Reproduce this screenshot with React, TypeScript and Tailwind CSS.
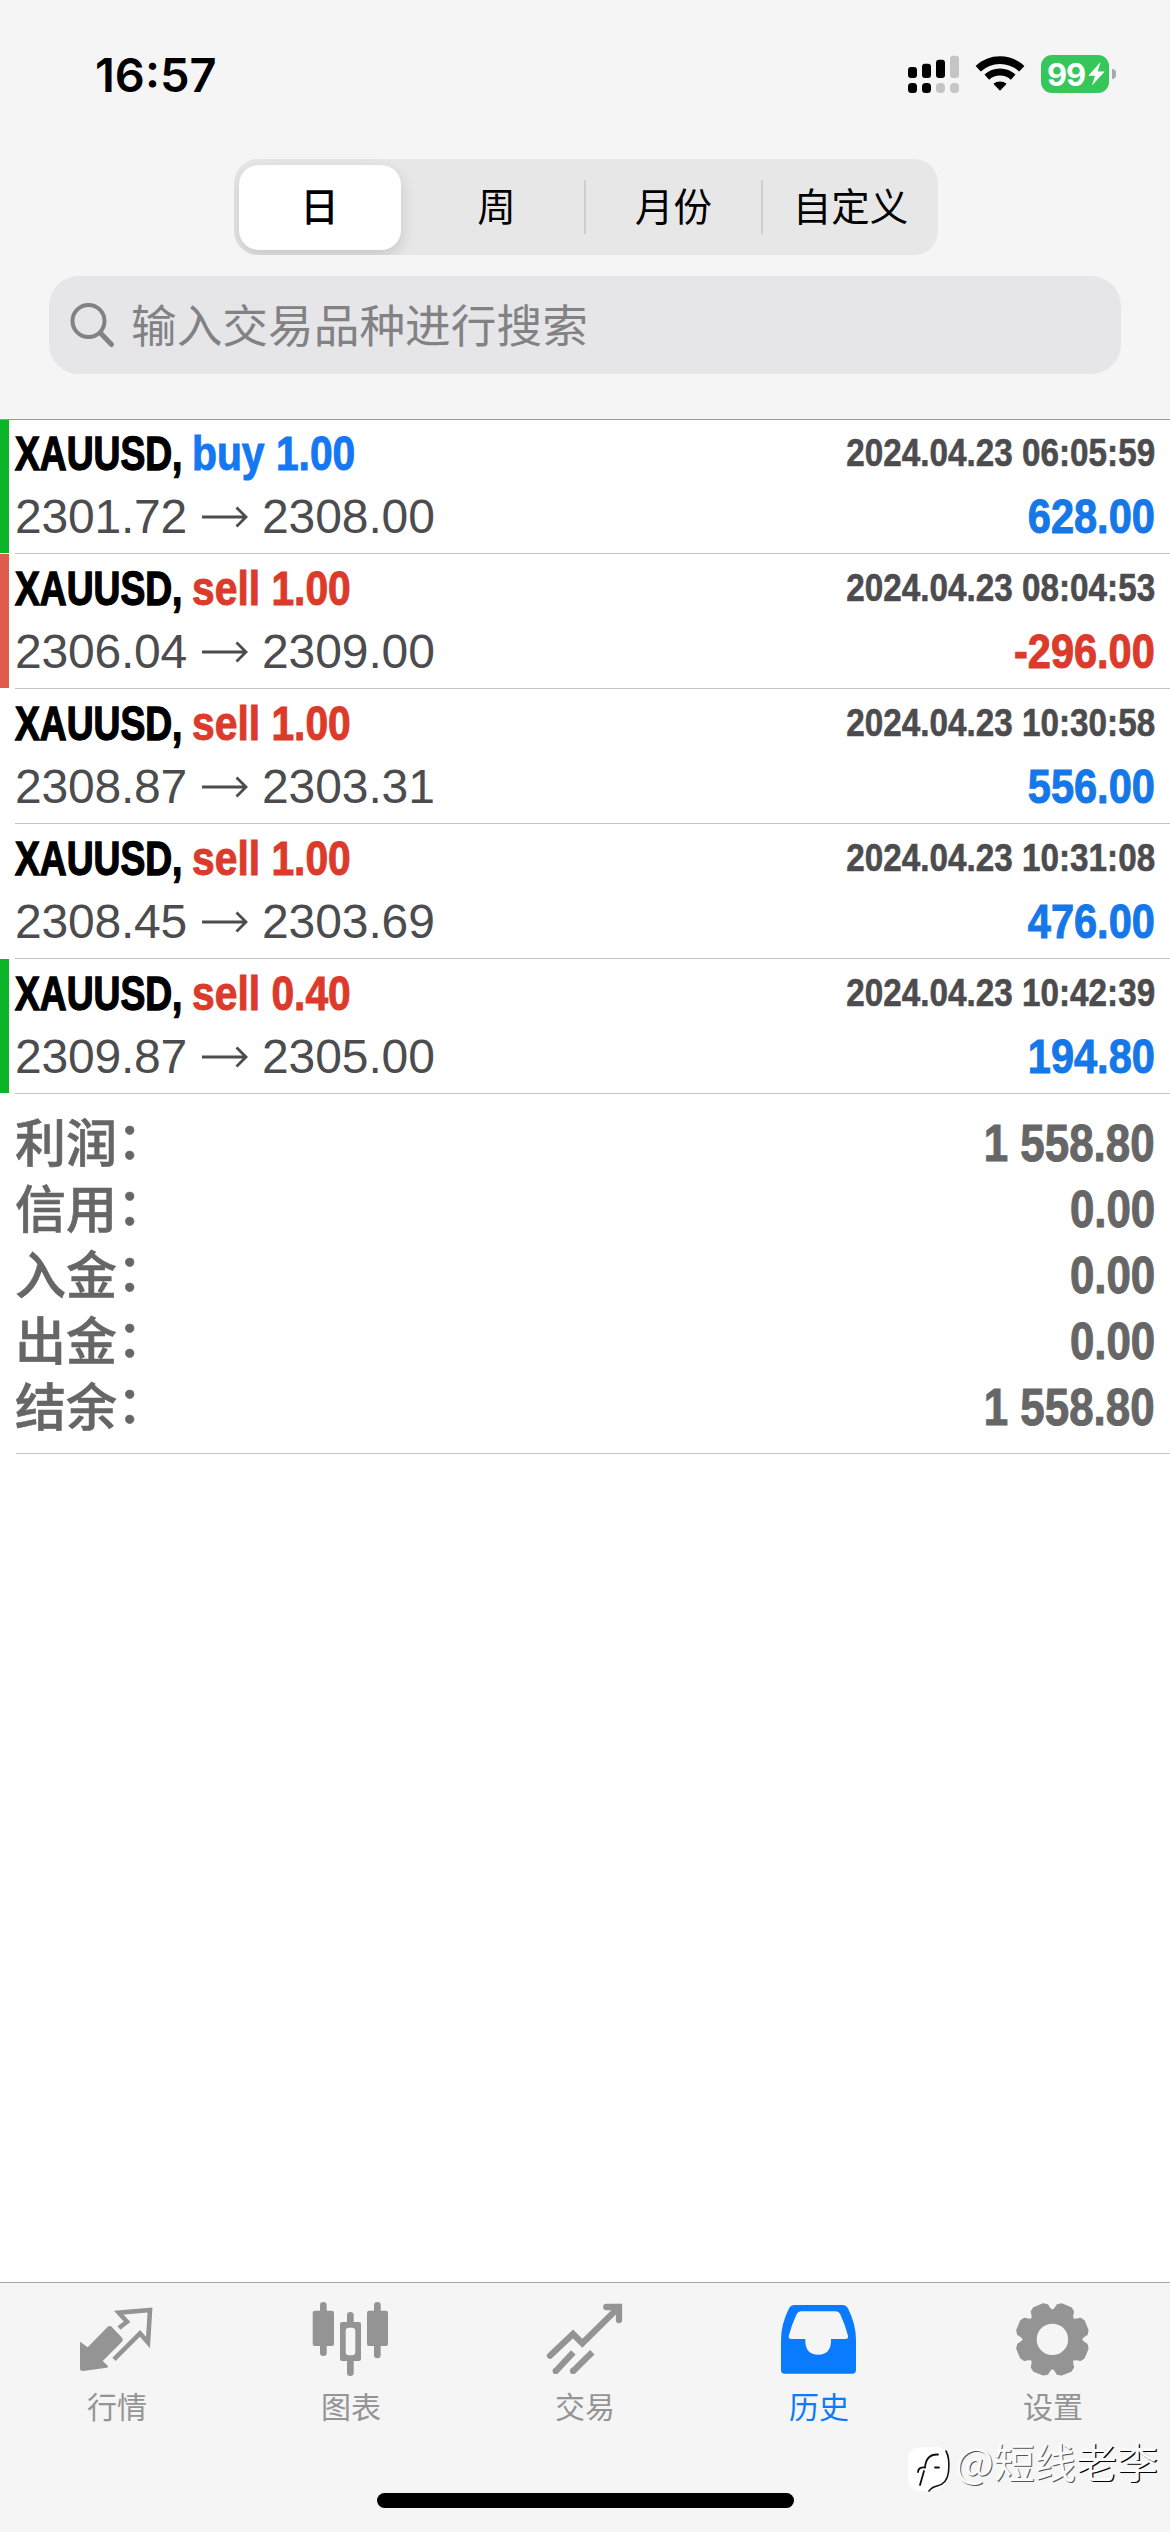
import type { ReactNode } from 'react';
import clsx from 'clsx';

interface Deal {
  symbol: string;
  side: 'buy' | 'sell';
  volume: string;
  open: string;
  close: string;
  time: string;
  profit: string;
  mark?: 'tp' | 'sl';
}

const deals: Deal[] = [
  { symbol: 'XAUUSD', side: 'buy', volume: '1.00', open: '2301.72', close: '2308.00', time: '2024.04.23 06:05:59', profit: '628.00', mark: 'tp' },
  { symbol: 'XAUUSD', side: 'sell', volume: '1.00', open: '2306.04', close: '2309.00', time: '2024.04.23 08:04:53', profit: '-296.00', mark: 'sl' },
  { symbol: 'XAUUSD', side: 'sell', volume: '1.00', open: '2308.87', close: '2303.31', time: '2024.04.23 10:30:58', profit: '556.00' },
  { symbol: 'XAUUSD', side: 'sell', volume: '1.00', open: '2308.45', close: '2303.69', time: '2024.04.23 10:31:08', profit: '476.00' },
  { symbol: 'XAUUSD', side: 'sell', volume: '0.40', open: '2309.87', close: '2305.00', time: '2024.04.23 10:42:39', profit: '194.80', mark: 'tp' },
];

const summary = [
  { label: '利润', value: '1 558.80' },
  { label: '信用', value: '0.00' },
  { label: '入金', value: '0.00' },
  { label: '出金', value: '0.00' },
  { label: '结余', value: '1 558.80' },
];

const periods = ['日', '周', '月份', '自定义'];

export default function App() {
  return (
    <div className="relative flex h-[2532px] w-[1170px] flex-col overflow-hidden bg-white font-['Liberation_Sans','Noto_Sans_CJK_SC',sans-serif]">
      <header className="flex h-[420px] shrink-0 flex-col border-b border-[#999] bg-[#f5f5f5]">
        <StatusBar />
        <PeriodTabs />
        <div className="mx-[49px] mt-[21px] flex h-[98px] items-center rounded-[30px] bg-[#e6e6e8] pl-[21px]">
          <svg className="mt-[2px] h-[46px] w-[46px] shrink-0" viewBox="0 0 46 46" fill="none" stroke="#828285" strokeLinecap="round">
            <circle cx="18.5" cy="18" r="16" strokeWidth="4" />
            <path d="M30.5 30 L41.5 41.5" strokeWidth="5" />
          </svg>
          <span className="mt-[6px] ml-[15px] text-[45.7px] leading-none text-[#828285]">输入交易品种进行搜索</span>
        </div>
      </header>

      <main className="flex grow flex-col">
        {deals.map((deal, idx) => (
          <DealRow key={deal.time} deal={deal} first={idx === 0} />
        ))}
        <section className="ml-4 h-[360px] border-b border-[#c8c8c8] pt-4 pr-[15px] text-[51px] text-[#666]">
          {summary.map((item) => (
            <div key={item.label} className="flex h-[66px] justify-between">
              <span className="-ml-px flex leading-[60px] font-medium font-['Noto_Sans_CJK_SC',sans-serif] [-webkit-text-stroke:0.6px_#666]">
                {item.label}
                <span className="-mt-[3px]">：</span>
              </span>
              <span className="origin-right scale-x-[0.86] leading-[67px] font-bold [-webkit-text-stroke:1px_#666]">{item.value}</span>
            </div>
          ))}
        </section>
      </main>

      <TabBar />
      <Watermark />
    </div>
  );
}

function StatusBar() {
  return (
    <div className="flex h-[158px] shrink-0 items-start pt-[54px] pr-[54px] pl-[95px]">
      <span className="mt-[-7px] font-['Inter',sans-serif] text-[47px] leading-[56px] font-semibold text-black">16:57</span>
      <svg className="ml-auto h-[40px] w-[52px]" viewBox="0 0 52 40">
        <g fill="#000">
          <rect x="0" y="13" width="9" height="11" rx="3" />
          <rect x="14" y="9.7" width="9" height="14.3" rx="3" />
          <rect x="28" y="5.7" width="9" height="18.3" rx="3" />
          <rect x="0" y="29" width="9" height="10" rx="3.5" />
          <rect x="14" y="29" width="9" height="10" rx="3.5" />
        </g>
        <g fill="#c5c5c5">
          <rect x="42" y="1.7" width="9" height="22.3" rx="3" />
          <rect x="28" y="29" width="9" height="10" rx="4" />
          <rect x="42" y="29" width="9" height="10" rx="4" />
        </g>
      </svg>
      <svg className="ml-[15px] h-[40px] w-[50px]" viewBox="0 0 50 40" fill="none" stroke="#000">
        <path d="M3.2 14.8 A31.8 31.8 0 0 1 46.8 14.8" strokeWidth="7.6" />
        <path d="M11.8 23.2 A19.6 19.6 0 0 1 38.2 23.2" strokeWidth="7" />
        <path d="M18.3 29.8 A10.5 10.5 0 0 1 31.7 29.8 L25 36.8 Z" fill="#000" stroke="none" />
      </svg>
      <div className="mt-px ml-[16px] flex h-[38px] w-[68px] items-center rounded-[11px] bg-[#35c759] pl-[6px]">
        <span className="font-['Inter',sans-serif] text-[31px] leading-none font-bold tracking-[-1.2px] text-white">99</span>
        <svg className="ml-[3px] h-[24px] w-[17px] shrink-0" viewBox="0 0 17 24" fill="#fff">
          <path d="M12.5 0 L0.3 13.8 H7 L4 23.5 L16.7 9.5 H9.8 Z" />
        </svg>
      </div>
      <div className="mt-[15px] ml-[3px] h-[10px] w-[4px] rounded-r-full bg-[#a9a9a9]" />
    </div>
  );
}

function PeriodTabs() {
  return (
    <div className="mx-auto mt-px flex h-[96px] w-[704px] shrink-0 translate-x-px items-center overflow-hidden rounded-[24px] bg-[#e7e7e7] text-[38.5px] leading-none text-black">
      {periods.map((period, idx) => (
        <div key={period} className={clsx('flex flex-1 items-center justify-center', idx > 1 ? 'h-[54px] border-l-2 border-[#cfcfcf]' : 'h-full')}>
          {idx === 0 ? (
            <span className="mr-[4px] flex h-[85px] w-[162px] items-center justify-center rounded-[20px] bg-white pt-[2px] font-medium shadow-[0_6px_16px_rgba(0,0,0,0.14)]">
              {period}
            </span>
          ) : (
            <span className="pt-[2px]">{period}</span>
          )}
        </div>
      ))}
    </div>
  );
}

function DealRow({ deal, first }: { deal: Deal; first: boolean }) {
  return (
    <div className={clsx('flex', first ? 'h-[134px]' : 'h-[135px]')}>
      <div
        className={clsx(
          'w-[9px] shrink-0',
          first ? 'h-[133px]' : 'h-[134px]',
          deal.mark === 'tp' && 'bg-[#0cb42a]',
          deal.mark === 'sl' && 'bg-[#e05d4e]',
        )}
      />
      <div className={clsx('ml-[6px] flex grow flex-col border-b border-[#c3c3c3] pr-[15px] text-[48px] leading-[63px] whitespace-nowrap', first ? 'pt-[2px]' : 'pt-[3px]')}>
        <div className="flex h-[63px] items-start font-bold">
          <span className="w-[177px] shrink-0">
            <span className="inline-block origin-left scale-x-[0.775] text-black [-webkit-text-stroke:1.4px_#000]">{deal.symbol},</span>
          </span>
          <span
            className={clsx(
              'w-[190px] origin-left scale-x-[0.85]',
              deal.side === 'buy' ? 'text-[#1577f2] [-webkit-text-stroke:1px_#1577f2]' : 'text-[#dc3b2b] [-webkit-text-stroke:1px_#dc3b2b]',
            )}
          >
            {deal.side} {deal.volume}
          </span>
          <span className="ml-auto origin-right scale-x-[0.853] text-[39px] leading-[62px] text-[#4c4c4e] [-webkit-text-stroke:0.6px_#4c4c4e]">{deal.time}</span>
        </div>
        <div className="flex h-[63px] items-center">
          <span className="w-[187px] tracking-[-0.2px] text-[#4c4c4e]">{deal.open}</span>
          <svg className="h-[22px] w-[46px]" viewBox="0 0 46 22" fill="none" stroke="#4c4c4e" strokeWidth="2.8">
            <path d="M0 11 H44 M34.5 1.5 L44 11 L34.5 20.5" />
          </svg>
          <span className="ml-[14px] tracking-[-0.1px] text-[#4c4c4e]">{deal.close}</span>
          <span
            className={clsx(
              'ml-auto origin-right scale-x-[0.865] font-bold',
              deal.profit.startsWith('-') ? 'text-[#dc3b2b] [-webkit-text-stroke:1px_#dc3b2b]' : 'text-[#1577e8] [-webkit-text-stroke:1px_#1577e8]',
            )}
          >
            {deal.profit}
          </span>
        </div>
      </div>
    </div>
  );
}

function TabBar() {
  return (
    <footer className="flex h-[250px] shrink-0 flex-col items-center border-t border-[#a6a6a6] bg-[#f5f5f5]">
      <nav className="grid w-full grid-cols-5 pt-[17px]">
        <Tab label="行情">
          <path
            d="M47 28 L55 21.7 L46.8 12.7 L78 10 L76 42.5 L68 33.3 L42 59.3"
            fill="none"
            stroke="currentColor"
            strokeWidth="4.6"
          />
          <path d="M8 41.7 L15.7 47.3 L36 26.6 Q37.7 25.2 39.4 26.6 L50.2 38 Q51.6 39.8 50.2 41.5 L30.7 61 L36 66 Q36.4 67.4 34.7 67.7 L11 71 Q8 71 8 68.5 Z" />
        </Tab>
        <Tab label="图表">
          <rect x="14" y="2" width="6.7" height="54" rx="3.3" />
          <rect x="6.7" y="10.7" width="21.3" height="35.3" rx="2" />
          <rect x="41" y="12" width="6.7" height="15" rx="3.3" />
          <rect x="41" y="56" width="6.7" height="20" rx="3.3" />
          <path fillRule="evenodd" d="M36 22 H53 Q55 22 55 24 V59 Q55 61 53 61 H36 Q34 61 34 59 V24 Q34 22 36 22 Z M43 27.7 Q39.7 27.7 39.7 31 V52 Q39.7 55.3 43 55.3 H46 Q49.3 55.3 49.3 52 V31 Q49.3 27.7 46 27.7 Z" />
          <rect x="68" y="2" width="6.7" height="56.3" rx="3.3" />
          <rect x="61" y="10.7" width="21" height="35.3" rx="2" />
        </Tab>
        <Tab label="交易">
          <g fill="none" stroke="currentColor" strokeWidth="6.3">
            <path d="M10 55.7 L33 34 L42.3 43.3 L78.3 7.7" strokeLinecap="round" />
            <path d="M66.3 7 H79 V20" strokeLinecap="round" />
            <path d="M15.6 71.3 L33.3 52.3 M33 71.3 L52.3 52.3" />
          </g>
          <circle cx="15.6" cy="71" r="3.1" />
          <circle cx="33" cy="71" r="3.1" />
        </Tab>
        <Tab label="历史" active>
          <path
            fillRule="evenodd"
            d="M20.5 5 H68.5 Q72 5 73.8 8 Q82 24 82 40 V70 Q82 73.7 78.3 73.7 H10.7 Q7 73.7 7 70 V40 Q7 24 15.2 8 Q17 5 20.5 5 Z M27 11.3 Q24 11.3 22.7 14 Q17.5 25 14.9 35.5 Q14 39 17.5 39 H31.3 V41 Q31.5 54.7 44.2 54.7 Q56.8 54.7 57 41 V39 H71.2 Q74.8 39 73.9 35.5 Q71.3 25 66.1 14 Q64.8 11.3 61.8 11.3 Z"
          />
        </Tab>
        <Tab label="设置">
          <Gear />
        </Tab>
      </nav>
      <div className="mt-[67px] h-[15px] w-[417px] rounded-full bg-black" />
    </footer>
  );
}

function Tab({ label, active, children }: { label: string; active?: boolean; children: ReactNode }) {
  return (
    <div className={clsx('flex flex-col items-center', active ? 'text-[#0a7aff]' : 'text-[#949494]')}>
      <svg className="h-[80px] w-[90px]" viewBox="0 0 90 80" fill="currentColor">
        {children}
      </svg>
      <span className="mt-[6px] h-[40px] text-[30px] leading-[43px]">{label}</span>
    </div>
  );
}

// Eight teeth with a narrow notch between each pair
function Gear() {
  const points: string[] = [];
  for (let i = 0; i < 8; i++) {
    const mid = 22.5 + i * 45;
    [[-22.5, 29], [-18, 31], [-14.5, 35], [-8, 36.8], [8, 36.8], [14.5, 35], [18, 31]].forEach(([deg, r]) => {
      const a = ((mid + deg) * Math.PI) / 180;
      points.push(`${(44.4 + r * Math.cos(a)).toFixed(2)} ${(39.4 + r * Math.sin(a)).toFixed(2)}`);
    });
  }
  return (
    <>
      <path d={`M${points.join(' L')} Z`} stroke="currentColor" strokeWidth="1.2" strokeLinejoin="round" />
      <circle cx="44.4" cy="39.4" r="15.7" fill="#f5f5f5" />
    </>
  );
}

function Watermark() {
  return (
    <div className="absolute top-[2440px] left-[907px] flex h-[56px] items-start whitespace-nowrap">
      <svg className="h-[56px] w-[46px]" viewBox="0 0 46 56" fill="none" strokeLinecap="round">
        <path d="M13 7 H30 Q42 8 42 20 V36 Q41 44 34 47 L24 51 H10 Q1 48 1 38 V18 Q2 8 13 7 Z" fill="#fff" />
        <path d="M13 45 L17 31 M11 32 Q11 27 18 27.5 Q19 14 31 14.5 M28 27.5 H32" stroke="#111" strokeWidth="1.8" />
        <path d="M39 11 Q43 18 41.5 32 Q40 44 30 46 Q25 47 22 51" stroke="#111" strokeWidth="1.6" />
      </svg>
      <span className="-mt-[8px] ml-[2px] flex text-[41px] leading-[56px] text-[#fbfbfb] font-['Noto_Sans_CJK_SC',sans-serif]">
        <span className="[text-shadow:1px_1px_0_#555]">@短线</span>
        <span className="[text-shadow:1.2px_1.2px_0_#000]">老李</span>
      </span>
    </div>
  );
}
